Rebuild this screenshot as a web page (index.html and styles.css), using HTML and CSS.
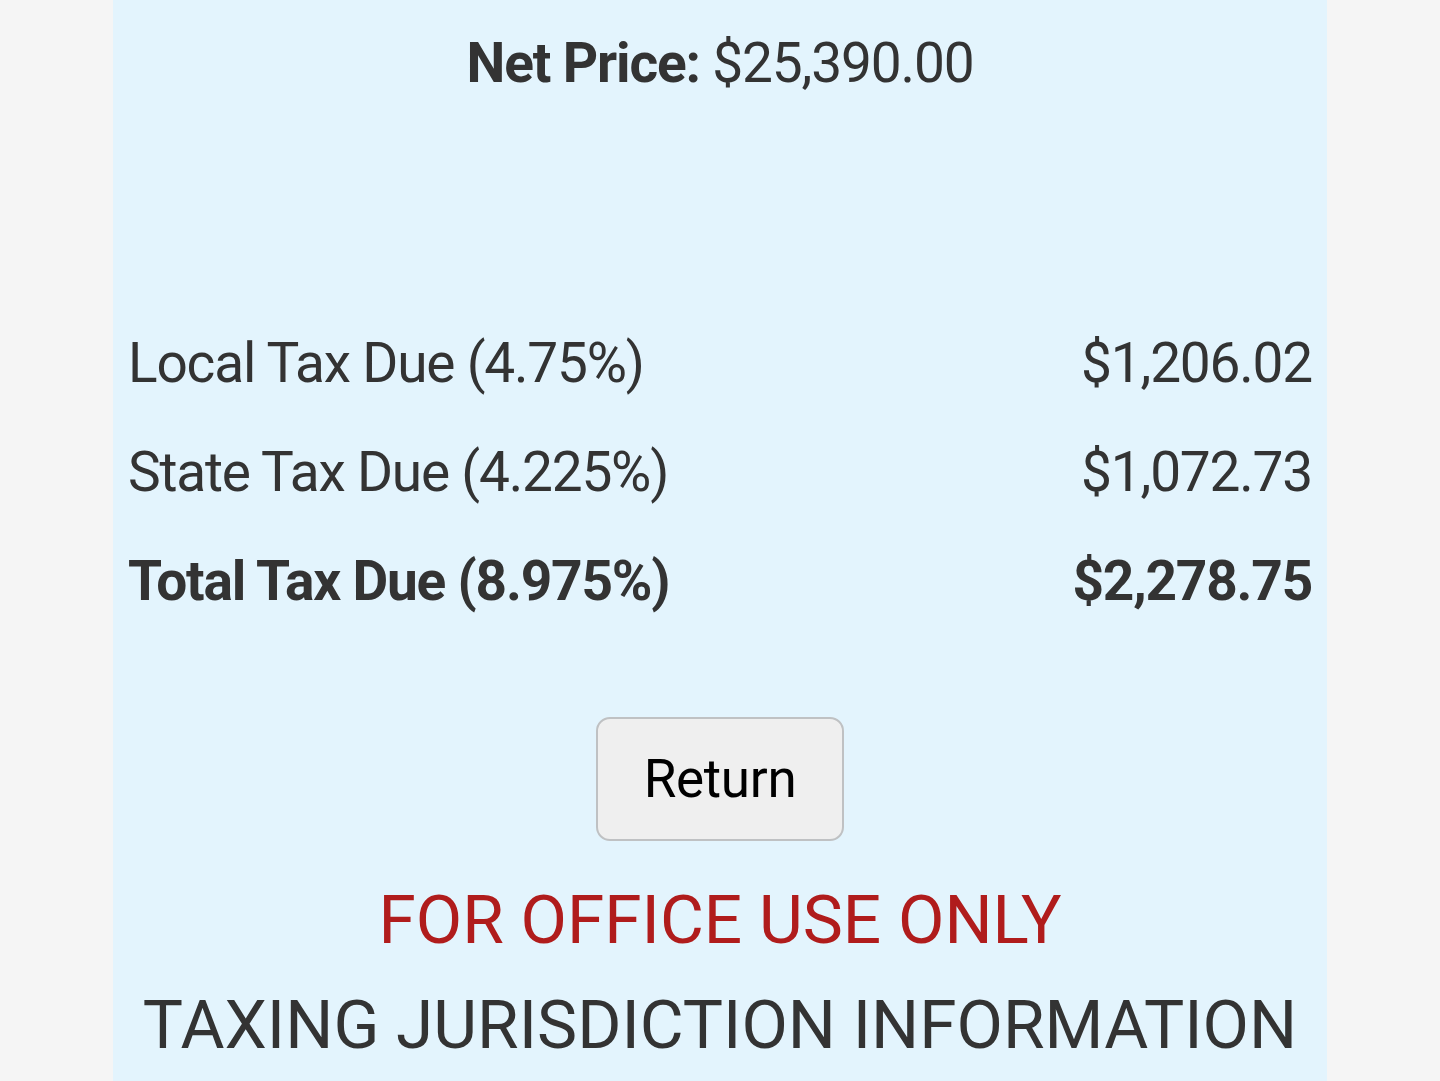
FILE: index.html
```html
<!DOCTYPE html>
<html lang="en">
<head>
<meta charset="utf-8">
<title>Tax Calculation</title>
<link rel="stylesheet" href="styles.css">
</head>
<body>
<main class="panel">
  <p class="net"><strong>Net Price:</strong> $25,390.00</p>
  <div class="taxes">
    <div class="row"><span>Local Tax Due (4.75%)</span><span>$1,206.02</span></div>
    <div class="row"><span>State Tax Due (4.225%)</span><span>$1,072.73</span></div>
    <div class="row total"><span>Total Tax Due (8.975%)</span><span>$2,278.75</span></div>
  </div>
  <div class="actions"><button class="btn" type="button">Return</button></div>
  <h2 class="office">FOR OFFICE USE ONLY</h2>
  <h2 class="juris">TAXING JURISDICTION INFORMATION</h2>
</main>
</body>
</html>
```

FILE: styles.css
```css
html, body {
  margin: 0;
  padding: 0;
  background: #f5f5f5;
  height: 100%;
  overflow: hidden;
}
body {
  font-family: Roboto, "Liberation Sans", sans-serif;
  color: #333333;
}
.panel {
  width: 1214px;
  margin: 0 auto;
  min-height: 1081px;
  background: #e3f4fd;
  padding: 30px 15px 0 15px;
  box-sizing: border-box;
}
.net {
  margin: 0;
  text-align: center;
  font-size: 55px;
  line-height: 66px;
  letter-spacing: -1.15px;
}
.net strong { font-weight: 700; }
.taxes {
  margin-top: 213px;
}
.row {
  display: flex;
  justify-content: space-between;
  font-size: 55px;
  line-height: 109px;
  letter-spacing: -1.2px;
}
.row.total { font-weight: 700; }
.actions {
  display: flex;
  justify-content: center;
  margin-top: 81px;
}
.btn {
  width: 248px;
  height: 124px;
  box-sizing: border-box;
  border: 2.5px solid #bfc1c3;
  border-radius: 14px;
  background: #efefef;
  color: #000;
  font-family: Roboto, "Liberation Sans", sans-serif;
  font-size: 53px;
  padding: 0;
  letter-spacing: -0.3px;
}
.office, .juris {
  margin: 0;
  text-align: center;
  font-weight: 400;
  font-size: 67.5px;
  line-height: 105px;
}
.office { color: #b01c1c; margin-top: 26px; }
.juris { color: #333333; }
```
